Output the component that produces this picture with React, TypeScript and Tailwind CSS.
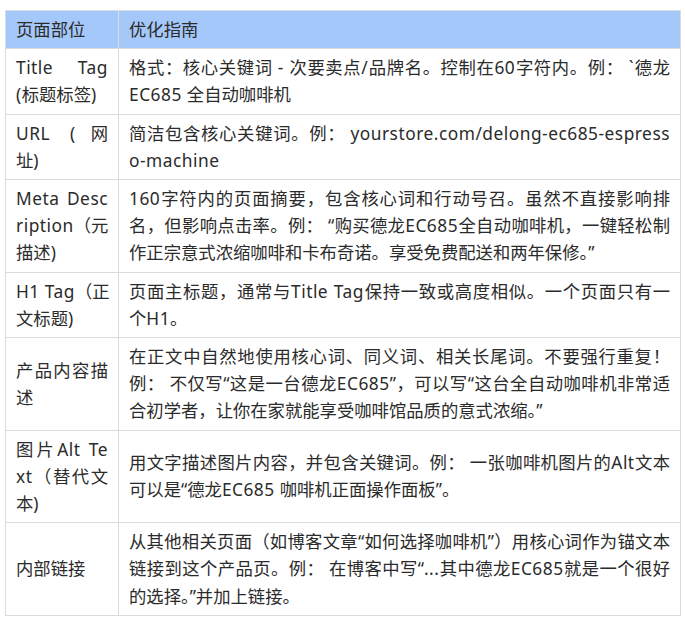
import React from "react";

type Row = { left: string[]; right: string[] };

const rows: Row[] = [
  {
    left: ["Title Tag", "(标题标签)"],
    right: [
      "格式：核心关键词 - 次要卖点/品牌名。控制在60字符内。例： `德龙",
      "EC685 全自动咖啡机",
    ],
  },
  {
    left: ["URL (网", "址)"],
    right: [
      "简洁包含核心关键词。例： yourstore.com/delong-ec685-espress",
      "o-machine",
    ],
  },
  {
    left: ["Meta Desc", "ription（元", "描述)"],
    right: [
      "160字符内的页面摘要，包含核心词和行动号召。虽然不直接影响排",
      "名，但影响点击率。例： “购买德龙EC685全自动咖啡机，一键轻松制",
      "作正宗意式浓缩咖啡和卡布奇诺。享受免费配送和两年保修。”",
    ],
  },
  {
    left: ["H1 Tag（正", "文标题)"],
    right: [
      "页面主标题，通常与Title Tag保持一致或高度相似。一个页面只有一",
      "个H1。",
    ],
  },
  {
    left: ["产品内容描", "述"],
    right: [
      "在正文中自然地使用核心词、同义词、相关长尾词。不要强行重复！",
      "例： 不仅写“这是一台德龙EC685”，可以写“这台全自动咖啡机非常适",
      "合初学者，让你在家就能享受咖啡馆品质的意式浓缩。”",
    ],
  },
  {
    left: ["图片Alt Te", "xt（替代文", "本)"],
    right: [
      "用文字描述图片内容，并包含关键词。例： 一张咖啡机图片的Alt文本",
      "可以是“德龙EC685 咖啡机正面操作面板”。",
    ],
  },
  {
    left: ["内部链接"],
    right: [
      "从其他相关页面（如博客文章“如何选择咖啡机”）用核心词作为锚文本",
      "链接到这个产品页。例： 在博客中写“...其中德龙EC685就是一个很好",
      "的选择。”并加上链接。",
    ],
  },
];

function Rich({ text }: { text: string }) {
  const parts = text.split(/([!-~][ -~]*)/);
  return (
    <>
      {parts.map((p, i) =>
        /^[!-~]/.test(p) ? (
          <span key={i} className="tracking-[0.5px]">
            {p}
          </span>
        ) : (
          <React.Fragment key={i}>{p}</React.Fragment>
        )
      )}
    </>
  );
}

function Lines({ lines }: { lines: string[] }) {
  return (
    <div className="w-full">
      {lines.map((l, i) =>
        i < lines.length - 1 ? (
          <div key={i} className="whitespace-nowrap text-justify [text-align-last:justify]">
            <Rich text={l} />
          </div>
        ) : (
          <div key={i} className="whitespace-nowrap">
            <Rich text={l} />
          </div>
        )
      )}
    </div>
  );
}

export default function App() {
  return (
    <div className="min-h-[618px] w-[685px] bg-white pl-[5px] pt-[10px] font-['Noto_Sans','Noto_Sans_CJK_SC',sans-serif] text-[17.33px] leading-[27.2px] text-[#2b2b2b]">
      <div className="grid w-[676px] grid-cols-[113px_562px] border-l border-t border-[#dcdcdc]">
        <div className="flex items-center border-b border-r border-[#dcdcdc] bg-[#a5c8fa] px-[10px] py-[5px]">
          页面部位
        </div>
        <div className="flex items-center border-b border-r border-[#dcdcdc] bg-[#a5c8fa] px-[10px] py-[5px]">
          优化指南
        </div>
        {rows.map((r, i) => (
          <React.Fragment key={i}>
            <div className="flex items-center border-b border-r border-[#dcdcdc] px-[10px] py-[5px]">
              <Lines lines={r.left} />
            </div>
            <div className="flex items-center border-b border-r border-[#dcdcdc] px-[10px] py-[5px]">
              <Lines lines={r.right} />
            </div>
          </React.Fragment>
        ))}
      </div>
    </div>
  );
}
